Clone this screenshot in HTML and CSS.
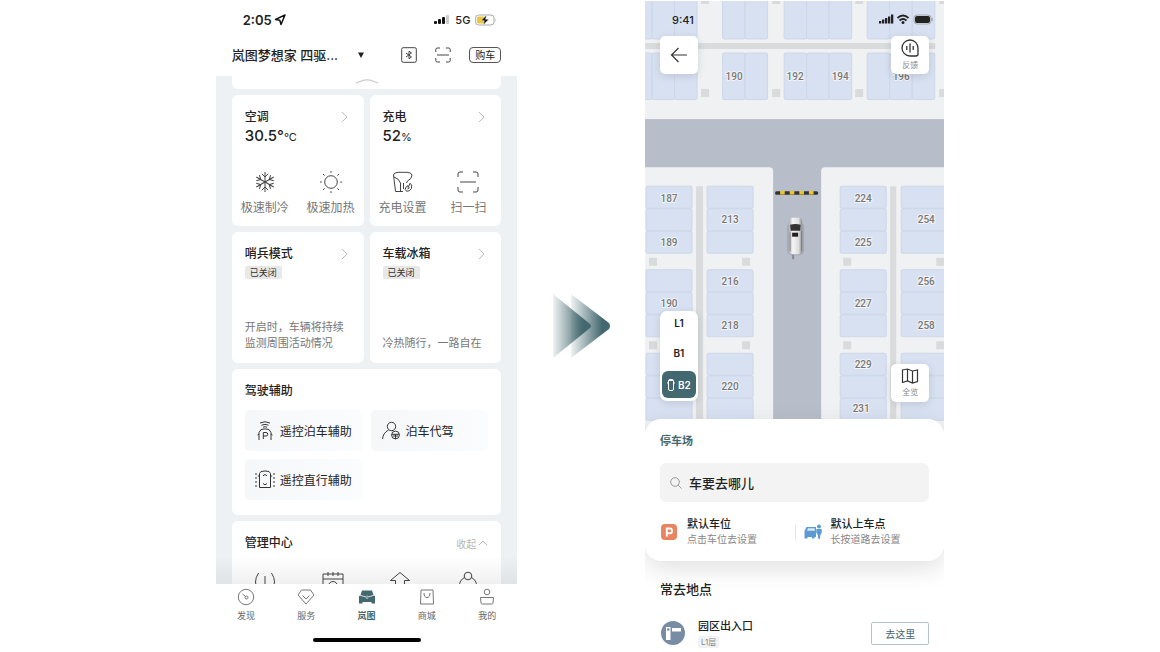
FILE: index.html
```html
<!DOCTYPE html>
<html lang="zh-CN">
<head>
    <meta charset="UTF-8">
    <meta name="viewport" content="width=device-width, initial-scale=1.0">
    <title>岚图</title>
    <link rel="stylesheet" href="styles.css">
</head>
<body>
    <main class="page">
        <!-- Vehicle control screen -->
        <section class="phone control">
            <div class="status-bar">
                <span class="time">2:05</span>
                <svg width="12" height="12" viewBox="0 0 12 12"><path d="M11 1 L7 10.500 L5.800 6.200 L1.500 5.400 Z" fill="none" stroke="#111" stroke-width="1.500" stroke-linejoin="round"/></svg>
                <div class="status-right">
                    <svg width="16" height="10" viewBox="0 0 16 10"><g fill="#111"><rect x="0" y="6" width="3" height="3" rx="1"/><rect x="4" y="4" width="3" height="5" rx="1"/><rect x="8" y="2" width="3" height="7" rx="1"/></g><rect x="12" y="0" width="3" height="9" rx="1" fill="#ccc"/></svg>
                    <span>5G</span>
                    <svg width="22" height="12" viewBox="0 0 22 12"><rect x=".6" y="1" width="18.4" height="10" rx="3" fill="#fff" stroke="#aaa"/><rect x="2" y="2.4" width="8" height="7.2" rx="1.6" fill="#ecc53c"/><path d="M11.8 .8 L6 6.7 H9.3 L8 11.2 L14 5.2 H10.6 Z" fill="#111" stroke="#fff" stroke-width=".5"/><path d="M20.2 4.3 Q21.6 6 20.2 7.7 Z" fill="#aaa"/></svg>
                </div>
            </div>

            <header class="car-header">
                <label class="car-picker">
                    <select aria-label="车辆">
                        <option>岚图梦想家 四驱...</option>
                    </select>
                    <svg width="6" height="6" viewBox="0 0 6 6"><path d="M0 .5 H6 L3 6 Z" fill="#222"/></svg>
                </label>
                <div class="header-tools">
                    <button class="tool" aria-label="蓝牙">
                        <svg width="16" height="16" viewBox="0 0 16 16" fill="none" stroke="#444"><rect x=".7" y=".7" width="14.6" height="14.6" rx="1.5"/><path d="M5 6 L10.500 10 L8 11.800 V4.200 L10.500 6 L5 10"/></svg>
                    </button>
                    <button class="tool" aria-label="扫码">
                        <svg width="16" height="16" viewBox="0 0 16 16" fill="none" stroke="#444"><path d="M.8 5 V2.500 Q.8 1 2.300 1 H5 M11 1 H13.700 Q15.200 1 15.200 2.500 V5 M15.200 11 V13.500 Q15.200 15 13.700 15 H11 M5 15 H2.300 Q.8 15 .8 13.500 V11 M2 8 H14"/></svg>
                    </button>
                    <button class="buy">购车</button>
                </div>
            </header>

            <div class="cards">
                <div class="card top-card">
                    <svg width="24" height="5" viewBox="0 0 24 5"><path d="M1 4 L9 1.2 Q12 .5 15 1.2 L23 4" fill="none" stroke="#ccc" stroke-width="1.3"/></svg>
                </div>

                <div class="card half">
                    <div class="card-head">
                        <h2>空调</h2>
                        <svg class="chevron" viewBox="0 0 7 12"><path d="M1 1 L6 6 L1 11"/></svg>
                    </div>
                    <p class="value">30.5°<small>°C</small></p>
                    <div class="quick-row">
                        <button class="quick">
                            <svg viewBox="0 0 22 22"><g id="arm"><path d="M11 11 V1 M7.8 2.8 L11 6 L14.2 2.8"/></g><use href="#arm" transform="rotate(60 11 11)"/><use href="#arm" transform="rotate(120 11 11)"/><use href="#arm" transform="rotate(180 11 11)"/><use href="#arm" transform="rotate(240 11 11)"/><use href="#arm" transform="rotate(300 11 11)"/></svg>
                            极速制冷
                        </button>
                        <button class="quick">
                            <svg viewBox="0 0 22 22"><circle cx="11" cy="11" r="6.3"/><path d="M11 0 V1.8 M11 20.2 V22 M0 11 H1.8 M20.2 11 H22 M3 3 L4.6 4.6 M17.4 17.4 L19 19 M3 19 L4.6 17.4 M17.4 4.6 L19 3"/></svg>
                            极速加热
                        </button>
                    </div>
                </div>

                <div class="card half">
                    <div class="card-head">
                        <h2>充电</h2>
                        <svg class="chevron" viewBox="0 0 7 12"><path d="M1 1 L6 6 L1 11"/></svg>
                    </div>
                    <p class="value">52<small>%</small></p>
                    <div class="quick-row">
                        <button class="quick">
                            <svg viewBox="0 0 22 22"><path d="M11 20.5 H3.5 L1.5 4 Q2 1.500 6 1.300 H15 Q19.500 1.500 20 4 Q20 8 15.500 10 L14.500 12 M2 6 Q7 7.500 8.500 12 V20 M11.500 12 V18"/><path d="M14.500 20.300 Q12.300 18.500 13.800 16.300 L16 14.700 L16.300 16.500 L18 12.300 Q20.500 13.500 19.500 17.500 Q18 20.500 14.500 20.300 M15.500 18 L17.500 16.800"/></svg>
                            充电设置
                        </button>
                        <button class="quick">
                            <svg viewBox="0 0 22 22"><path d="M1 6 V3 Q1 1 3 1 H6 M16 1 H19 Q21 1 21 3 V6 M21 16 V19 Q21 21 19 21 H16 M6 21 H3 Q1 21 1 19 V16 M3 11 H19"/></svg>
                            扫一扫
                        </button>
                    </div>
                </div>

                <div class="card half">
                    <div class="card-head">
                        <h2>哨兵模式</h2>
                        <svg class="chevron" viewBox="0 0 7 12"><path d="M1 1 L6 6 L1 11"/></svg>
                    </div>
                    <span class="state">已关闭</span>
                    <p class="desc">开启时，车辆将持续<br>监测周围活动情况</p>
                </div>

                <div class="card half">
                    <div class="card-head">
                        <h2>车载冰箱</h2>
                        <svg class="chevron" viewBox="0 0 7 12"><path d="M1 1 L6 6 L1 11"/></svg>
                    </div>
                    <span class="state">已关闭</span>
                    <p class="desc">冷热随行，一路自在</p>
                </div>

                <div class="card wide">
                    <h2>驾驶辅助</h2>
                    <div class="assist-grid">
                        <button class="assist">
                            <svg viewBox="0 0 20 20"><path d="M5 2 Q10 -.5 15 2 M6.500 4.200 Q10 2.500 13.500 4.200 M8 6.200 Q10 5.200 12 6.200 M4 19 V11.500 L6 8.500 Q10 7.300 14 8.500 L16 11.500 V19 M4 13 L2.500 14 M16 13 L17.500 14 M8.300 18 V11.500 H11 Q12.800 11.500 12.800 13.300 Q12.800 15 11 15 H8.300"/></svg>
                            遥控泊车辅助
                        </button>
                        <button class="assist">
                            <svg viewBox="0 0 20 20"><circle cx="10.500" cy="5.500" r="4.200"/><path d="M1.500 18 Q2 12 7.500 9"/><circle cx="14.500" cy="14" r="3.900"/><path d="M10.800 13.300 H18.200 M14.500 13.300 V18 M12 15 H17"/></svg>
                            泊车代驾
                        </button>
                        <button class="assist">
                            <svg viewBox="0 0 20 20"><path d="M6 1.500 Q10 .5 14 1.500 L15.500 3.500 V17.500 H4.500 V3.500 Z M8 5.800 L10 4.500 L12 5.800 M8 13.500 L10 14.800 L12 13.500 M4.500 6 H2.800 M15.500 6 H17.200"/><path d="M1 3 V18 M19 3 V18" stroke-dasharray="2 2"/></svg>
                            遥控直行辅助
                        </button>
                    </div>
                </div>

                <div class="card wide manage">
                    <div class="card-head">
                        <h2>管理中心</h2>
                        <button class="fold">收起<svg width="10" height="6" viewBox="0 0 10 6"><path d="M1 5 L5 1 L9 5" fill="none" stroke="#b5b5b5"/></svg></button>
                    </div>
                    <div class="manage-row">
                        <svg viewBox="0 0 22 22"><path d="M4.500 2 Q-1.500 11 4.500 20 M17.500 2 Q23.500 11 17.500 20 M11 5 V14"/></svg>
                        <svg viewBox="0 0 22 22"><path d="M1 3 H21 V21 H1 Z M1 8 H21 M6 1 V5 M11 1 V5 M16 1 V5"/><circle cx="11" cy="15" r="4.500"/></svg>
                        <svg viewBox="0 0 22 22"><path d="M11 1.500 L20.500 9.500 H15.500 V20 H6.500 V9.500 H1.500 Z"/></svg>
                        <svg viewBox="0 0 22 22"><circle cx="11" cy="5" r="3.800"/><path d="M7.500 6.500 Q2.500 9 2 16 M14.500 6.500 Q19.500 9 20 16"/></svg>
                    </div>
                </div>
            </div>

            <nav class="tab-bar">
                <a href="#" class="tab">
                    <svg viewBox="0 0 18 18"><circle cx="9" cy="9" r="7.700"/><circle cx="9.500" cy="9.500" r="1.500"/><path d="M8.500 8.500 L5.500 6"/></svg>
                    发现
                </a>
                <a href="#" class="tab">
                    <svg viewBox="0 0 18 18"><path d="M4.500 2 H13.500 L17 7 L9 16 L1 7 Z M5.500 7.500 L9 11 L12.500 7.500"/></svg>
                    服务
                </a>
                <a href="#" class="tab active">
                    <svg viewBox="0 0 18 18"><path d="M4 2.500 H14 L15.500 7 L17 8 V15.500 H13.500 V14 H4.500 V15.500 H1 V8 L2.500 7 Z" fill="#43686f" stroke="none"/><path d="M1 7 L8 9 M17 7 L10 9 M9 7.500 V11" stroke="#fff" stroke-width=".8"/></svg>
                    岚图
                </a>
                <a href="#" class="tab">
                    <svg viewBox="0 0 18 18"><path d="M3 2 H15 L15.500 16 H2.500 Z M6 5 Q6 9.500 9 9.500 Q12 9.500 12 5"/></svg>
                    商城
                </a>
                <a href="#" class="tab">
                    <svg viewBox="0 0 18 18"><circle cx="9" cy="4" r="2.800"/><path d="M2.500 9.500 H15.500 L15 15 Q15 16 13.500 16 H4.500 Q3 16 3 15 Z"/></svg>
                    我的
                </a>
            </nav>
            <div class="home-line"></div>
        </section>

        <!-- Double arrow between the two screens -->
        <svg class="arrow" viewBox="0 0 58 66">
            <defs>
                <linearGradient id="fade"><stop offset="0" stop-color="#43686f" stop-opacity=".08"/><stop offset=".8" stop-color="#43686f"/></linearGradient>
            </defs>
            <path d="M19 1 L57 30 Q59 33 57 36 L19 65 Z" fill="url(#fade)"/>
            <path d="M1 1 L38 31 Q40 33 38 35 L1 65 Z" fill="url(#fade)"/>
        </svg>

        <!-- Parking map screen -->
        <section class="phone parking">
            <div class="map">
                <svg class="map-canvas" viewBox="645 1 299 430">
                    <defs>
                        <g id="stack" class="slot"><rect width="46" height="22" rx="2"/><rect y="22.500" width="46" height="22" rx="2"/><rect y="45" width="46" height="22" rx="2"/></g>
                        <g id="column"><use href="#stack" y="186"/><use href="#stack" y="269.500"/><use href="#stack" y="353"/></g>
                        <g id="bay" class="slot"><rect y="-8" width="22.500" height="47" rx="2"/><rect y="53" width="22.500" height="46.500" rx="2"/></g>
                        <g id="pillars" fill="#d9dadc"><rect y="-4" width="8" height="8"/><rect y="89" width="8" height="8"/></g>
                        <g id="posts" fill="#d9dadc"><rect y="257.500" width="8" height="8"/><rect y="341" width="8" height="8"/></g>
                        <linearGradient id="body"><stop offset="0" stop-color="#aaa"/><stop offset=".3" stop-color="#f5f5f5"/><stop offset=".75" stop-color="#ddd"/><stop offset="1" stop-color="#888"/></linearGradient>
                    </defs>
                    <rect x="645" y="1" width="299" height="430" fill="#f0f1f3"/>
                    <rect x="645" y="43" width="290" height="6" fill="#dadbdd"/>
                    <use href="#bay" x="629.500"/><use href="#bay" x="652"/><use href="#bay" x="674.500"/>
                    <use href="#bay" x="722.500"/><use href="#bay" x="745"/>
                    <use href="#bay" x="784"/><use href="#bay" x="806.500"/><use href="#bay" x="829"/>
                    <use href="#bay" x="867"/><use href="#bay" x="889.500"/><use href="#bay" x="912"/>
                    <use href="#pillars" x="701"/><use href="#pillars" x="772"/><use href="#pillars" x="855"/><use href="#pillars" x="939"/>

                    <!-- Roads -->
                    <rect x="645" y="119" width="299" height="312" fill="#b7bdc9"/>
                    <path d="M645 167 H769 Q773 167 773 171 V431 H645 Z M944 167 H825 Q821 167 821 171 V431 H944 Z" fill="#f0f1f3"/>
                    <path d="M696 186 H703 V431 H696 Z M890 186 H896 V431 H890 Z" fill="#dadbdd"/>
                    <use href="#column" x="646"/><use href="#column" x="707"/><use href="#column" x="840"/><use href="#column" x="901"/>
                    <use href="#posts" x="649"/><use href="#posts" x="742"/><use href="#posts" x="843"/><use href="#posts" x="936"/>

                    <!-- Barrier -->
                    <rect x="775" y="191" width="43" height="3.500" rx="1.500" fill="#333"/>
                    <path d="M780 192.700 H814" stroke="#ecc52d" stroke-width="3.500" stroke-dasharray="4.600 5"/>

                    <!-- Car -->
                    <path d="M793 248 V259" stroke="#858b96" stroke-width="2"/>
                    <rect x="787" y="222" width="17" height="33" rx="5" fill="#8e949f" opacity=".5"/>
                    <rect x="788.500" y="217.500" width="13.500" height="36.500" rx="4" fill="url(#body)"/>
                    <path d="M790 224.500 Q795 223 800.500 224.500 L800 230.500 H790.500 Z" fill="#333"/>
                    <rect x="792" y="232.500" width="6" height="4" fill="#222"/>
                    <path d="M790 232 V251 M801.500 231 V251" stroke="#777" stroke-width=".8"/>

                    <g class="slot-no">
                        <text x="734" y="80">190</text><text x="795" y="80">192</text><text x="840" y="80">194</text><text x="901" y="80">196</text>
                        <text x="669" y="202">187</text><text x="669" y="246">189</text><text x="669" y="307">190</text>
                        <text x="730" y="223">213</text><text x="730" y="285">216</text><text x="730" y="329">218</text><text x="730" y="390">220</text>
                        <text x="863" y="202">224</text><text x="863" y="246">225</text><text x="863" y="307">227</text><text x="863" y="368">229</text><text x="861" y="412">231</text>
                        <text x="926" y="223">254</text><text x="926" y="285">256</text><text x="926" y="329">258</text>
                    </g>
                </svg>

                <div class="map-status">
                    <span>9:41</span>
                    <svg width="54" height="12" viewBox="0 0 54 12"><g fill="#222"><rect x="0" y="7" width="2.300" height="2.500"/><rect x="3" y="5.500" width="2.300" height="4"/><rect x="6" y="4" width="2.300" height="5.500"/><rect x="9" y="2.500" width="2.300" height="7"/><rect x="12" y=".5" width="2.300" height="9"/><rect x="36" y="2" width="15" height="7" rx="2"/></g><rect x="35" y="1" width="17" height="9" rx="3" fill="none" stroke="#888" stroke-width=".6"/><path d="M53 4 V7" stroke="#888"/><path d="M18.500 4 Q24 -1 29.500 4 M20.500 6.500 Q24 3.500 27.500 6.500" fill="none" stroke="#222" stroke-width="1.700"/><circle cx="24" cy="8.500" r="1.500" fill="#222"/></svg>
                </div>

                <button class="float back" aria-label="返回">
                    <svg width="18" height="16" viewBox="0 0 18 16"><path d="M17 8 H1.500 M8.500 1 L1.500 8 L8.500 15" fill="none" stroke="#333" stroke-width="1.200"/></svg>
                </button>
                <button class="float feedback">
                    <svg width="20" height="18" viewBox="0 0 20 18" fill="none" stroke="#333" stroke-width="1.300"><path d="M10 1 A8 8 0 1 0 10 17 H16 Q18 17 18 15 V9 A8 8 0 0 0 10 1 Z M10 4.500 V13.500 M6.800 7 V11 M13.200 7 V11"/></svg>
                    反馈
                </button>
                <div class="floors">
                    <button>L1</button>
                    <button>B1</button>
                    <button class="on"><svg width="8" height="14" viewBox="0 0 8 14" fill="none" stroke="#fff"><rect x="1.500" y="1.500" width="5" height="11" rx="1.500"/><path d="M2 2.500 H6 M0 5 H1.500 M6.500 5 H8"/></svg>B2</button>
                </div>
                <button class="float overview">
                    <svg width="18" height="16" viewBox="0 0 18 16" fill="none" stroke="#333" stroke-width="1.200"><path d="M1.500 2 L6.500 1 L11.500 3 L16.500 2 V13.500 L11.500 15 L6.500 13 L1.500 14.500 Z M6.500 1 V13 M11.500 3 V15"/></svg>
                    全览
                </button>
            </div>

            <div class="sheet">
                <h2>停车场</h2>
                <label class="search">
                    <svg width="12" height="12" viewBox="0 0 12 12" fill="none" stroke="#999"><circle cx="5" cy="5" r="4.300"/><path d="M8.200 8.200 L11.500 11.500"/></svg>
                    <input type="text" placeholder="车要去哪儿" aria-label="车要去哪儿">
                </label>
                <div class="defaults">
                    <button class="default">
                        <svg width="18" height="18" viewBox="0 0 18 18"><rect x="1" y="1" width="16" height="16" rx="4" fill="#e98460"/><path d="M6.800 13.500 V5.500 H9.700 Q12 5.500 12 7.900 Q12 10.300 9.700 10.300 H6.800" fill="none" stroke="#fff" stroke-width="1.900"/></svg>
                        <span><b>默认车位</b><small>点击车位去设置</small></span>
                    </button>
                    <button class="default">
                        <svg width="18" height="18" viewBox="0 0 18 18" fill="#5b9bd2"><path d="M.5 8 L2.500 4 H12 V14 H10.500 V15.500 H8 V14 H3.500 V15.500 H.5 Z"/><circle cx="15" cy="3.500" r="2"/><path d="M12.300 6 H17.700 V10 L16.500 11.500 L15.800 16 H14.400 L13.700 11.500 L12.300 10 Z"/><path d="M3 7.700 L4 5.300 H10.500 L11 7.700 Z" fill="#d9e9f6"/></svg>
                        <span><b>默认上车点</b><small>长按道路去设置</small></span>
                    </button>
                </div>
            </div>

            <div class="places">
                <h2>常去地点</h2>
                <div class="place">
                    <svg width="26" height="26" viewBox="0 0 26 26"><circle cx="13" cy="13" r="12" fill="#788ca4"/><path d="M6 7 H10.500 V20 H6 Z M12 8 H21 V11.500 H12 Z" fill="#fff"/><circle cx="8.200" cy="9.500" r="1.300" fill="#788ca4"/></svg>
                    <div class="place-info">
                        <b>园区出入口</b>
                        <span class="floor-tag">L1层</span>
                    </div>
                    <button class="go">去这里</button>
                </div>
            </div>
        </section>
    </main>
</body>
</html>
```
FILE: styles.css
```css
body {
    margin: 0;
    background-color: #fff;
    font-family: Inter, "Noto Sans CJK SC", sans-serif;
    font-size: 12px;
    color: #222;
}

h2, p {
    margin: 0;
}

button, select, input {
    margin: 0;
    padding: 0;
    border: none;
    background: none;
    font-family: inherit;
    font-size: inherit;
    color: inherit;
}

svg {
    display: block;
    flex-shrink: 0;
}

.page {
    display: flex;
    justify-content: center;
    gap: 3%;
}

.phone {
    height: 100vh;
    min-width: 290px;
    display: flex;
    flex-direction: column;
    overflow: hidden;
}

.control {
    width: 26%;
}

.parking {
    width: 25.8%;
}

.arrow {
    width: 5%;
    align-self: center;
}

/* Status bar and header */
.status-bar {
    display: flex;
    align-items: center;
    height: 40px;
    padding: 0 20px 0 27px;
    gap: 2px;
}

.time {
    font-size: 13px;
    font-weight: 600;
}

.status-right {
    display: flex;
    align-items: center;
    gap: 5px;
    margin-left: auto;
    font-size: 11px;
    font-weight: 500;
}

.car-header {
    display: flex;
    align-items: center;
    justify-content: space-between;
    height: 30px;
    padding: 0 16px 6px;
}

.car-picker {
    display: flex;
    align-items: center;
    gap: 14px;
}

.car-picker select {
    appearance: none;
    width: 112px;
    font-size: 13px;
    font-weight: 500;
    line-height: 20px;
}

.header-tools {
    display: flex;
    align-items: center;
    gap: 18px;
}

.buy {
    width: 32px;
    height: 16px;
    border: 1px solid #555;
    border-radius: 4px;
    font-size: 10px;
    line-height: 14px;
}

/* Cards */
.cards {
    position: relative;
    flex: 1;
    min-height: 0;
    overflow: hidden;
    display: grid;
    grid-template-columns: 1fr 1fr;
    align-content: start;
    gap: 6px;
    padding: 0 16px;
    background-color: #eef1f4;
}

/* Shade above the tab bar */
.cards::after {
    content: "";
    position: absolute;
    left: 0;
    right: 0;
    bottom: 0;
    height: 28px;
    background: linear-gradient(rgba(0, 0, 0, 0), rgba(0, 0, 0, 0.06));
}

.card {
    box-sizing: border-box;
    border-radius: 6px;
    background-color: #fff;
}

.card h2 {
    font-size: 12px;
    font-weight: 500;
    line-height: 18px;
}

.top-card {
    grid-column: 1 / -1;
    display: flex;
    justify-content: center;
    height: 13px;
    padding-top: 3px;
    border-radius: 0 0 6px 6px;
}

.half {
    display: flex;
    flex-direction: column;
    min-height: 131px;
    padding: 13px 13px 12px;
}

.card-head {
    display: flex;
    align-items: center;
    justify-content: space-between;
}

.chevron {
    width: 7px;
    height: 12px;
    margin-right: 3px;
    fill: none;
    stroke: #bbb;
}

.value {
    font-size: 15px;
    font-weight: 500;
    line-height: 20px;
}

.value small {
    font-size: 11px;
    font-weight: 400;
}

.quick-row {
    display: flex;
    margin: auto -13px 0;
}

.quick {
    flex: 1;
    display: flex;
    flex-direction: column;
    align-items: center;
    gap: 6px;
    margin-bottom: -3px;
    line-height: 18px;
    color: #777;
}

.quick svg,
.manage-row svg {
    width: 22px;
    height: 22px;
    fill: none;
    stroke: #444;
}

.state {
    align-self: flex-start;
    margin-top: 3px;
    padding: 0 5px;
    border-radius: 2px;
    background-color: #e8e8e8;
    font-size: 9px;
    line-height: 13px;
    color: #333;
}

.desc {
    margin-top: auto;
    font-size: 11px;
    line-height: 16px;
    color: #777;
}

.wide {
    grid-column: 1 / -1;
    padding: 13px 13px 15px;
}

.assist-grid {
    display: grid;
    grid-template-columns: 1fr 1fr;
    gap: 8px;
    margin-top: 10px;
}

.assist {
    display: flex;
    align-items: center;
    gap: 5px;
    height: 41px;
    padding-left: 10px;
    border-radius: 5px;
    background: linear-gradient(90deg, #f6f7f8, #fbfcfd);
}

.assist svg {
    width: 20px;
    height: 20px;
    fill: none;
    stroke: #333;
}

.fold {
    display: flex;
    align-items: center;
    gap: 2px;
    font-size: 10px;
    color: #b5b5b5;
}

.manage-row {
    display: flex;
    justify-content: space-around;
    margin: 19px -13px 0;
}

/* Tab bar */
.tab-bar {
    display: flex;
    height: 54px;
}

.tab {
    flex: 1;
    display: flex;
    flex-direction: column;
    align-items: center;
    gap: 3px;
    padding-top: 4px;
    font-size: 9px;
    line-height: 14px;
    color: #666;
    text-decoration: none;
}

.tab svg {
    width: 18px;
    height: 18px;
    fill: none;
    stroke: #777;
}

.tab.active {
    color: #43686f;
    font-weight: 700;
}

.home-line {
    width: 108px;
    height: 4px;
    margin: 0 auto 10px;
    border-radius: 2px;
    background-color: #000;
}

/* Parking map */
.map {
    position: relative;
    margin-top: 1px;
}

.map-canvas {
    width: 100%;
}

.slot {
    fill: #d7e1f2;
    stroke: #cdd7e8;
}

.slot-no {
    font-family: Roboto, sans-serif;
    font-size: 10px;
    font-weight: 500;
    text-anchor: middle;
    fill: #777;
    stroke: #f3f4f6;
    stroke-width: 2px;
    paint-order: stroke;
}

.map-status {
    position: absolute;
    top: 12px;
    left: 27px;
    right: 11px;
    display: flex;
    align-items: center;
    justify-content: space-between;
    font-size: 11px;
    font-weight: 500;
    line-height: 14px;
}

.float {
    position: absolute;
    display: flex;
    flex-direction: column;
    align-items: center;
    justify-content: center;
    width: 38px;
    height: 38px;
    border-radius: 5px;
    background-color: #fff;
    box-shadow: 0 2px 8px rgba(0, 0, 0, 0.12);
    font-size: 8px;
    line-height: 12px;
    gap: 2px;
    color: #888;
}

.back {
    top: 35px;
    left: 15px;
}

.feedback {
    top: 35px;
    right: 15px;
}

.overview {
    top: 363px;
    right: 15px;
}

.floors {
    position: absolute;
    top: 310px;
    left: 15px;
    box-sizing: border-box;
    width: 38px;
    padding: 0 2px 3px;
    border-radius: 7px;
    background-color: #fff;
    box-shadow: 0 2px 8px rgba(0, 0, 0, 0.12);
}

.floors button {
    display: flex;
    align-items: center;
    justify-content: center;
    gap: 3px;
    width: 100%;
    height: 24px;
    margin-bottom: 6px;
    border-radius: 6px;
    font-size: 10px;
    font-weight: 600;
}

.floors .on {
    height: 27px;
    margin-bottom: 0;
    background-color: #43686f;
    color: #fff;
}

/* Search sheet */
.sheet {
    position: relative;
    margin-top: -12px;
    padding: 13px 15px 14px;
    border-radius: 16px;
    background-color: #fff;
    box-shadow: 0 8px 24px rgba(0, 0, 0, 0.12);
}

.sheet h2 {
    font-size: 11px;
    font-weight: 700;
    line-height: 18px;
    color: #43686f;
}

.search {
    display: flex;
    align-items: center;
    gap: 7px;
    height: 39px;
    margin-top: 13px;
    padding: 0 10px;
    border-radius: 6px;
    background-color: #f3f3f3;
}

.search input {
    flex: 1;
    min-width: 0;
    font-size: 13px;
    font-weight: 500;
}

.search input::placeholder {
    color: #222;
    opacity: 1;
}

.defaults {
    display: grid;
    grid-template-columns: 1fr 1fr;
    margin-top: 15px;
}

.default {
    display: flex;
    align-items: center;
    gap: 9px;
    text-align: left;
}

.default + .default {
    padding-left: 9px;
    background: linear-gradient(#e8e8e8, #e8e8e8) left center / 1px 17px no-repeat;
}

.default b,
.default small {
    display: block;
    line-height: 15px;
    white-space: nowrap;
}

.default b {
    font-size: 11px;
    font-weight: 500;
}

.default small {
    font-size: 10px;
    color: #888;
}

.places {
    padding: 18px 15px 0;
}

.places h2 {
    font-size: 13px;
    font-weight: 500;
    line-height: 20px;
}

.place {
    display: flex;
    align-items: center;
    margin-top: 19px;
}

.place-info {
    display: flex;
    flex-direction: column;
    align-items: flex-start;
    gap: 2px;
    margin-left: 12px;
}

.place-info b {
    font-size: 11px;
    font-weight: 500;
    line-height: 16px;
}

.floor-tag {
    padding: 0 3px;
    border-radius: 2px;
    background-color: #f1f2f4;
    font-size: 8px;
    line-height: 12px;
    color: #888;
}

.go {
    box-sizing: border-box;
    width: 58px;
    height: 23px;
    margin-left: auto;
    border: 1px solid #b4c5c8;
    border-radius: 2px;
    font-size: 10px;
    color: #43686f;
}
```
